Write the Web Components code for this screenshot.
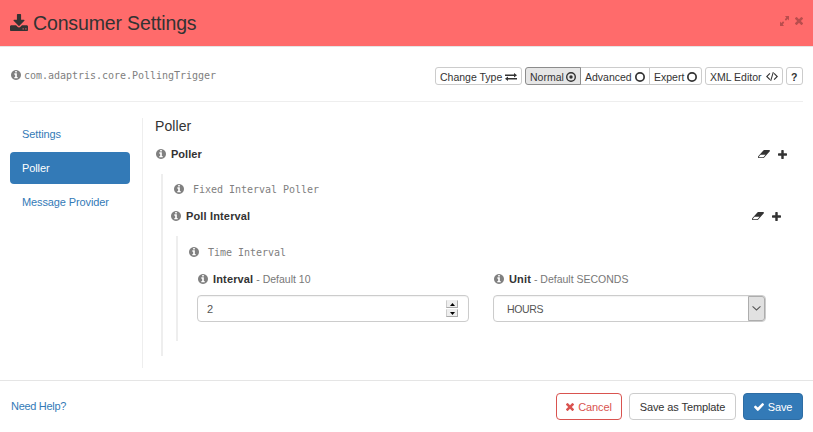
<!DOCTYPE html>
<html lang="en"><head><meta charset="utf-8"><title>Consumer Settings</title>
<style>
html,body{margin:0;height:100%;overflow:hidden;background:#fff}
body{font:11px/16px "Liberation Sans",Arial,sans-serif;color:#333}
</style></head><body>
<settings-dialog></settings-dialog>
<script>
const ICONS={
download:['64 0 1664 1536','M1344 1344q0-26-19-45t-45-19-45 19-19 45 19 45 45 19 45-19 19-45zm256 0q0-26-19-45t-45-19-45 19-19 45 19 45 45 19 45-19 19-45zm128-224v320q0 40-28 68t-68 28h-1472q-40 0-68-28t-28-68v-320q0-40 28-68t68-28h465l135 136q58 56 136 56t136-56l136-136h464q40 0 68 28t28 68zm-325-569q17 41-14 70l-448 448q-18 19-45 19t-45-19l-448-448q-31-29-14-70 17-39 59-39h256v-448q0-26 19-45t45-19h256q26 0 45 19t19 45v448h256q42 0 59 39z'],
info:['128 128 1536 1536','M1152 1376v-160q0-14-9-23t-23-9h-96v-512q0-14-9-23t-23-9h-320q-14 0-23 9t-9 23v160q0 14 9 23t23 9h96v320h-96q-14 0-23 9t-9 23v160q0 14 9 23t23 9h448q14 0 23-9t9-23zm-128-896v-160q0-14-9-23t-23-9h-192q-14 0-23 9t-9 23v160q0 14 9 23t23 9h192q14 0 23-9t9-23zm640 416q0 209-103 385.5t-279.5 279.5-385.5 103-385.5-103-279.5-279.5-103-385.5 103-385.5 279.5-279.5 385.5-103 385.5 103 279.5 279.5 103 385.5z'],
eraser:['0 256 1856 1280','M832 1408l336-384h-768l-336 384h768zm1013-1077q15 34 9.5 71.5t-30.5 65.5l-896 1024q-38 44-96 44h-768q-38 0-69.5-20.5t-47.5-54.5q-15-34-9.5-71.5t30.5-65.5l896-1024q38-44 96-44h768q38 0 69.5 20.5t47.5 54.5z'],
plus:['192 128 1408 1408','M1600 736v192q0 40-28 68t-68 28h-416v416q0 40-28 68t-68 28h-192q-40 0-68-28t-28-68v-416h-416q-40 0-68-28t-28-68v-192q0-40 28-68t68-28h416v-416q0-40 28-68t68-28h192q40 0 68 28t28 68v416h416q40 0 68 28t28 68z'],
times:['302 366 1188 1188','M1490 1322q0 40-28 68l-136 136q-28 28-68 28t-68-28l-294-294-294 294q-28 28-68 28t-68-28l-136-136q-28-28-28-68t28-68l294-294-294-294q-28-28-28-68t28-68l136-136q28-28 68-28t68 28l294 294 294-294q28-28 68-28t68 28l136 136q28 28 28 68t-28 68l-294 294 294 294q28 28 28 68z'],
check:['121 333 1550 1190','M1671 566q0 40-28 68l-724 724-136 136q-28 28-68 28t-68-28l-136-136-362-362q-28-28-28-68t28-68l136-136q28-28 68-28t68 28l294 295 656-657q28-28 68-28t68 28l136 136q28 28 28 68z'],
expand:['0 0 10 10','M5.5 0H10v4.5L8.5 3 6.6 4.7 5.3 3.4 7 1.5zM0 5.5L1.5 7 3.4 5.3 4.7 6.6 3 8.5 4.5 10H0z'],
exchange:['0 0 12 9','M0 1.7h9V0l3 2.5L9 5V3.3H0zM12 5.7H3V4L0 6.5 3 9V7.3h9z'],
code:['0 0 12 9','M3.5 1l.8.8L1.6 4.5l2.7 2.7-.8.8L0 4.5zM8.5 1l-.8.8 2.7 2.7-2.7 2.7.8.8L12 4.5zM6.8 0l1 .3L5.2 9l-1-.3z'],
circle:['0 0 10 10','M5 0a5 5 0 1 0 0 10A5 5 0 0 0 5 0zm0 1.7a3.3 3.3 0 1 1 0 6.6 3.3 3.3 0 0 1 0-6.6z'],
dot:['0 0 10 10','M5 0a5 5 0 1 0 0 10A5 5 0 0 0 5 0zm0 1.4a3.6 3.6 0 1 1 0 7.2 3.6 3.6 0 0 1 0-7.2zM5 3.3a1.7 1.7 0 1 0 0 3.4 1.7 1.7 0 0 0 0-3.4z'],
chevron:['0 0 10 6','M1 0l4 4 4-4 .8.8L5 5.6.2.8z'],
up:['0 0 5 3','M0 3L2.5 0 5 3z'],down:['0 0 5 3','M0 0l2.5 3L5 0z']
};
const define=(name,html)=>customElements.define(name,class extends HTMLElement{
  connectedCallback(){
    if(this.shadowRoot)return;
    const t=document.createElement('template');
    t.innerHTML=typeof html==='function'?html(this):html;
    this.attachShadow({mode:'open'}).append(t.content.cloneNode(true));
  }
});
define('ui-icon',e=>{
  const [box,d]=ICONS[e.getAttribute('name')];
  const even=['circle','dot'].includes(e.getAttribute('name'))?'evenodd':'nonzero';
  return `<style>:host{display:inline-flex;flex:none}svg{display:block;fill:currentColor}</style>
  <svg width="${e.getAttribute('w')}" height="${e.getAttribute('h')||e.getAttribute('w')}" viewBox="${box}" preserveAspectRatio="none"><path fill-rule="${even}" d="${d}"/></svg>`;
});
define('mini-button',`<style>
:host{display:flex;box-sizing:border-box;height:18px;border:1px solid #ccc;border-radius:3px;align-items:center;justify-content:space-between;padding:1px 4px 0;white-space:nowrap;background:#fff;font-size:10.5px;line-height:16px}
:host([first]){border-radius:3px 0 0 3px;background:#e6e6e6;border-color:#8c8c8c;z-index:1}
:host([mid]){border-radius:0;margin-left:-1px}
:host([last]){border-radius:0 3px 3px 0;margin-left:-1px}
</style><slot></slot>`);
define('action-button',`<style>
:host{display:flex;box-sizing:border-box;height:27px;border:1px solid #ccc;border-radius:4px;align-items:center;justify-content:center;gap:4px;background:#fff;white-space:nowrap;letter-spacing:-.1px}
:host([danger]){border-color:#d9534f;color:#d9534f}
:host([primary]){border-color:#2e6da4;background:#337ab7;color:#fff}
</style><slot></slot>`);
define('nav-item',`<style>
:host{display:flex;align-items:center;height:32px;padding-left:12px;border-radius:4px;color:#337ab7;letter-spacing:-.11px}
:host([active]){background:#337ab7;color:#fff}
</style><slot></slot>`);
define('class-name',`<style>
:host{display:flex;align-items:center;height:16px;color:#808080;font:10px/16px "DejaVu Sans Mono",monospace;letter-spacing:-.02px}
ui-icon{margin-right:var(--gap,9px)}span{padding-top:2px;line-height:14px}
</style><ui-icon name="info" w="10"></ui-icon><span><slot></slot></span>`);
define('field-label',`<style>
:host{display:flex;align-items:center;height:16px;white-space:pre}
ui-icon{color:#808080;margin-right:5px}b{letter-spacing:var(--ls,.03px)}.tools{margin-left:auto;display:flex;align-items:center;gap:8px}.tools ui-icon{color:#333;margin:0}
:host(:not([tools])) .tools{display:none}
</style><ui-icon name="info" w="10"></ui-icon><b><slot></slot></b><slot name="hint"></slot><div class="tools"><ui-icon name="eraser" w="12" h="8"></ui-icon><ui-icon name="plus" w="9"></ui-icon></div>`);
define('number-input',`<style>
:host{display:flex;box-sizing:border-box;height:27px;border:1px solid #ccc;border-radius:4px;align-items:center;padding:0 10px 0 9px;color:#555;justify-content:space-between;box-shadow:inset 0 1px 1px rgba(0,0,0,.05)}
.spin{display:grid;grid-template-rows:8px 8px;gap:1px;width:12px}
.spin i{box-sizing:border-box;display:flex;align-items:center;justify-content:center;background:#eee;border:1px solid #ccc;border-top-color:#eee;border-right-color:#aaa;border-bottom-color:#aaa;color:#000}
</style><slot></slot><div class="spin"><i><ui-icon name="up" w="5" h="3"></ui-icon></i><i><ui-icon name="down" w="5" h="3"></ui-icon></i></div>`);
define('select-input',`<style>
:host{display:flex;box-sizing:border-box;height:27px;border:1px solid #ccc;border-radius:4px;align-items:center;padding-left:13px;color:#555;justify-content:space-between;box-shadow:inset 0 1px 1px rgba(0,0,0,.05)}
span{font-size:10.5px;letter-spacing:-.35px}
i{box-sizing:border-box;display:flex;align-items:center;justify-content:center;width:17px;height:25px;background:#e1e1e1;border:1px solid #adadad;border-radius:0 3px 3px 0}
</style><span><slot></slot></span><i><ui-icon name="chevron" w="9" h="5"></ui-icon></i>`);
define('nested-group',`<style>:host{display:block;box-sizing:border-box;border-left:2px solid #eee}</style><slot></slot>`);
define('settings-dialog',`<style>
:host{display:flex;flex-direction:column;height:432px;width:813px;background:#fff}
header{box-sizing:border-box;height:47px;background:#ff6b6b;border-bottom:1px solid #e5e5e5;display:flex;align-items:center;padding:0 10px}
header>ui-icon{margin-bottom:2px}
h1{margin:0 auto 0 5px;font-size:19.5px;font-weight:400;line-height:24px;letter-spacing:-.14px}
.win{display:flex;gap:6px;color:#b94d4d;align-items:center;margin-bottom:4px}
.bar{display:flex;margin:0 10px;height:54px;border-bottom:1px solid #eee;align-items:flex-start}
.bar class-name{--gap:3px;margin:20px auto 0 1px}
.btns{display:flex;gap:3px;margin-top:20px}.grp{display:flex}
.body{display:flex;margin:16px 10px 0;height:250px}
nav{box-sizing:border-box;width:133px;border-right:1px solid #eee;padding-right:12px;display:flex;flex-direction:column;gap:2px}
nav nav-item:last-child{height:31px}
main{flex:1;padding-left:12px}
h2{font-size:14px;line-height:16px;margin:0 0 12px;font-weight:400;letter-spacing:.08px}
.fields{display:grid;grid-template-columns:272px 273px;column-gap:24px;padding:12px 0 0 19px}
.fields field-label{margin-bottom:8px;padding-left:1px;--ls:.15px}
[slot=hint]{color:#777;font-size:10.5px}
footer{box-sizing:border-box;margin-top:auto;height:52px;border-top:1px solid #e5e5e5;display:flex;align-items:flex-start;padding:12px 10px 0 11px;gap:7px}
footer a{margin:5px auto 0 0;color:#337ab7;letter-spacing:-.3px}
</style>
<header><ui-icon name="download" w="18" h="17"></ui-icon><h1>Consumer Settings</h1><div class="win"><ui-icon name="expand" w="9" h="10"></ui-icon><ui-icon name="times" w="8"></ui-icon></div></header>
<div class="bar"><class-name>com.adaptris.core.PollingTrigger</class-name>
<div class="btns"><mini-button style="width:87px">Change Type<ui-icon name="exchange" w="12" h="8"></ui-icon></mini-button>
<div class="grp"><mini-button first style="width:56px">Normal<ui-icon name="dot" w="10"></ui-icon></mini-button><mini-button mid style="width:70px">Advanced<ui-icon name="circle" w="10"></ui-icon></mini-button><mini-button last style="width:53px">Expert<ui-icon name="circle" w="10"></ui-icon></mini-button></div>
<mini-button style="width:78px">XML Editor<ui-icon name="code" w="12" h="9"></ui-icon></mini-button><mini-button style="width:17px"><b>?</b></mini-button></div></div>
<div class="body"><nav><nav-item>Settings</nav-item><nav-item active>Poller</nav-item><nav-item>Message Provider</nav-item></nav>
<main><h2>Poller</h2>
<field-label tools style="padding:0 16px 0 1px">Poller</field-label>
<nested-group style="margin:12px 0 0 6px;height:182px;padding-top:7px">
<class-name style="margin-left:11px">Fixed Interval Poller</class-name>
<field-label tools style="padding:0 22px 0 8px;margin-top:11px;--ls:.15px">Poll Interval</field-label>
<nested-group style="margin:12px 0 0 13px;height:105px;padding-top:8px">
<class-name style="margin-left:11px">Time Interval</class-name>
<div class="fields" style="padding-top:11px"><div><field-label>Interval<span slot="hint"> - Default 10</span></field-label><number-input>2</number-input></div>
<div><field-label>Unit<span slot="hint"> - Default SECONDS</span></field-label><select-input>HOURS</select-input></div></div>
</nested-group></nested-group></main></div>
<footer><a>Need Help?</a><action-button danger style="width:66px"><ui-icon name="times" w="8"></ui-icon>Cancel</action-button><action-button style="width:107px">Save as Template</action-button><action-button primary style="width:60px"><ui-icon name="check" w="10" h="8"></ui-icon>Save</action-button></footer>`);
</script></body></html>
